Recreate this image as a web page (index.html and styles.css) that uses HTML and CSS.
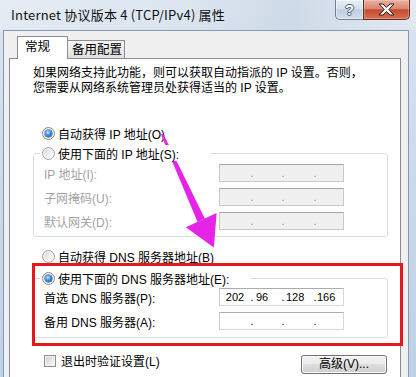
FILE: index.html
```html
<!DOCTYPE html>
<html lang="zh-CN">
<head>
<meta charset="utf-8">
<title>Internet 协议版本 4 (TCP/IPv4) 属性</title>
<link rel="stylesheet" href="styles.css">
</head>
<body>
<div class="window">
  <div class="titlebar">
    <span class="title">Internet 协议版本 4 (TCP/IPv4) 属性</span>
    <div class="caption">
      <div class="cap-btn help"><span class="help-glyph">?</span></div>
      <div class="cap-btn close">
        <svg width="17" height="13" viewBox="0 0 17 13"><polygon points="1,1 5,1 8.5,4.3 12,1 16,1 10.8,6.5 16,12 12,12 8.5,8.7 5,12 1,12 6.2,6.5" fill="#fff" stroke="#3c1810" stroke-width="1" stroke-linejoin="round"/></svg>
      </div>
    </div>
  </div>
  <div class="client">
    <div class="tabs">
      <div class="tab active">常规</div>
      <div class="tab">备用配置</div>
    </div>
    <div class="panel">
      <p class="desc">如果网络支持此功能，则可以获取自动指派的 IP 设置。否则，<br>您需要从网络系统管理员处获得适当的 IP 设置。</p>

      <div class="opt first"><span class="radio checked"></span><span>自动获得 IP 地址(O)</span></div>
      <div class="opt legend legend-ip"><span class="radio"></span><span>使用下面的 IP 地址(S):</span></div>
      <div class="group group-ip">
        <div class="field"><span class="lbl dis">IP 地址(I):</span>
          <div class="ipbox dis"><span class="seg s1"></span><span class="dot">.</span><span class="seg s2"></span><span class="dot">.</span><span class="seg s3"></span><span class="dot">.</span><span class="seg s4"></span></div>
        </div>
        <div class="field"><span class="lbl dis">子网掩码(U):</span>
          <div class="ipbox dis"><span class="seg s1"></span><span class="dot">.</span><span class="seg s2"></span><span class="dot">.</span><span class="seg s3"></span><span class="dot">.</span><span class="seg s4"></span></div>
        </div>
        <div class="field"><span class="lbl dis">默认网关(D):</span>
          <div class="ipbox dis"><span class="seg s1"></span><span class="dot">.</span><span class="seg s2"></span><span class="dot">.</span><span class="seg s3"></span><span class="dot">.</span><span class="seg s4"></span></div>
        </div>
      </div>

      <div class="opt after-group"><span class="radio"></span><span>自动获得 DNS 服务器地址(B)</span></div>
      <div class="opt legend legend-dns"><span class="radio checked"></span><span>使用下面的 DNS 服务器地址(E):</span></div>
      <div class="group group-dns">
        <div class="field"><span class="lbl">首选 DNS 服务器(P):</span>
          <div class="ipbox"><span class="seg s1">202</span><span class="dot">.</span><span class="seg s2">96</span><span class="dot">.</span><span class="seg s3">128</span><span class="dot">.</span><span class="seg s4">166</span></div>
        </div>
        <div class="field"><span class="lbl">备用 DNS 服务器(A):</span>
          <div class="ipbox"><span class="seg s1"></span><span class="dot">.</span><span class="seg s2"></span><span class="dot">.</span><span class="seg s3"></span><span class="dot">.</span><span class="seg s4"></span></div>
        </div>
      </div>

      <div class="bottom-row">
        <div class="check-opt"><span class="checkbox"></span><span>退出时验证设置(L)</span></div>
        <div class="btn">高级(V)...</div>
      </div>
    </div>
  </div>

  <svg class="arrow" width="416" height="377" viewBox="0 0 416 377">
    <polygon points="160.9,134.6 163.1,133.4 204.8,218.5 197.6,221.9" fill="#e524e8"/>
    <polygon points="216.6,213.1 213.9,247.6 185.8,227.3" fill="#e524e8"/>
  </svg>
  <div class="annot"></div>
</div>
</body>
</html>
```

FILE: styles.css
```css
* { box-sizing: border-box; }

html, body {
  margin: 0;
  padding: 0;
}

body {
  font-family: "Liberation Sans", "Noto Sans CJK SC", sans-serif;
  font-size: 12px;
  color: #000;
  background: #fff;
}

.window {
  position: relative;
  width: 416px;
  height: 377px;
  overflow: hidden;
  display: flex;
  flex-direction: column;
  background: linear-gradient(180deg, #dce6f1 0%, #cddbea 40%, #bed2e8 100%);
}

/* ---------- title bar ---------- */
.titlebar {
  flex: none;
  height: 30px;
  display: flex;
  align-items: flex-start;
  padding-left: 11px;
  background: linear-gradient(90deg, rgba(255,255,255,0.25) 0%, rgba(255,255,255,0) 45%, rgba(120,140,165,0.12) 70%, rgba(255,255,255,0.2) 100%);
}

.title {
  margin-top: 6px;
  font-family: "Noto Sans CJK SC", sans-serif;
  font-size: 13px;
  line-height: 18px;
  letter-spacing: 0.2px;
  color: #111;
  white-space: nowrap;
}

.caption {
  margin-left: auto;
  margin-right: 6px;
  display: flex;
}

.cap-btn {
  height: 20px;
  display: flex;
  align-items: center;
  justify-content: center;
}

.help {
  width: 28px;
  border: 1px solid #6f8198;
  border-top: 0;
  border-right: 0;
  border-radius: 0 0 0 5px;
  background: linear-gradient(180deg, #e8eef5 0%, #d6e1ed 45%, #bfcfe1 52%, #d0dded 100%);
  box-shadow: inset 0 0 0 1px rgba(255,255,255,0.45);
}

.help-glyph {
  font-family: "Liberation Sans", sans-serif;
  font-weight: bold;
  font-size: 15px;
  line-height: 16px;
  color: #fff;
  text-shadow: 1px 0 0 #4b5a6e, -1px 0 0 #4b5a6e, 0 1px 0 #4b5a6e, 0 -1px 0 #4b5a6e;
}

.close {
  width: 47px;
  border: 1px solid #5e2c22;
  border-top: 0;
  border-radius: 0 0 5px 0;
  background: linear-gradient(180deg, #e9b1a2 0%, #da8670 45%, #c44a31 52%, #d3714f 100%);
  box-shadow: inset 0 0 0 1px rgba(255,220,200,0.35);
}

/* ---------- client area ---------- */
.client {
  flex: 1;
  min-height: 0;
  margin: 0 7px 0 3px;
  background: #f0f0f0;
  border: 1px solid #8698ae;
  border-bottom: 0;
  padding: 5px 7px 0 5px;
  display: flex;
  flex-direction: column;
}

.tabs {
  flex: none;
  height: 22px;
  display: flex;
  align-items: flex-end;
  padding-left: 8px;
  position: relative;
  z-index: 1;
}

.tab {
  height: 18px;
  width: 57px;
  border: 1px solid #898c95;
  border-left: 0;
  border-bottom: 0;
  background: linear-gradient(180deg, #f6f6f6 0%, #ebebeb 50%, #dedede 100%);
  padding: 2px 0 0 4px;
  font-size: 12.5px;
  line-height: 15px;
  white-space: nowrap;
}

.tab.active {
  height: 23px;
  width: 51px;
  border-left: 1px solid #898c95;
  background: #fff;
  margin-bottom: -1px;
  padding: 3px 0 0 7px;
}

.panel {
  flex: 1;
  background: #fff;
  border: 1px solid #898c95;
  border-bottom: 0;
  padding: 7px 12px 0 23px;
}

.desc {
  margin: 0;
  line-height: 15px;
  white-space: nowrap;
}

/* ---------- options ---------- */
.opt {
  display: flex;
  align-items: center;
  height: 16px;
  padding-left: 9px;
  gap: 3px;
  white-space: nowrap;
}

.opt.first { margin-top: 29px; }
.opt.after-group { margin-top: 11px; }

.legend {
  position: relative;
  z-index: 1;
  background: #fff;
  margin-left: 7px;
  padding-left: 2px;
}

.legend-ip { margin-top: 4px; width: 170px; }
.legend-dns { margin-top: 6px; width: 210px; }

.radio {
  position: relative;
  flex: none;
  width: 13px;
  height: 13px;
  border-radius: 50%;
  border: 1px solid #a4a4a4;
  background: linear-gradient(135deg, #d6d6d6 0%, #f2f2f2 60%, #ffffff 100%);
  box-shadow: inset 0 0 0 1px #f7f7f7;
}

.radio.checked {
  border-color: #8a8a8a;
}

.radio.checked::after {
  content: "";
  position: absolute;
  left: 2px;
  top: 2px;
  width: 7px;
  height: 7px;
  border-radius: 50%;
  background: radial-gradient(circle at 40% 35%, #c4e6ff 0%, #4a9ae6 40%, #124fa0 85%);
  box-shadow: 0 0 0 0.5px #1b4f8e;
}

/* ---------- group boxes ---------- */
.group {
  margin-top: -8px;
  border: 1px solid #d5dfe5;
  border-radius: 3px;
  display: flex;
  flex-direction: column;
  gap: 6px;
}

.group-ip { padding: 10px 0 6px 10px; }
.group-dns { padding: 9px 0 7px 10px; }

.field {
  display: flex;
  align-items: center;
  height: 18px;
}

.lbl {
  width: 175px;
  flex: none;
  white-space: nowrap;
}

.lbl.dis { color: #a2a2a2; }

.ipbox {
  width: 125px;
  height: 18px;
  border: 1px solid #d3d7dc;
  border-top-color: #a9adb3;
  border-left-color: #c8ccd1;
  background: #fff;
  display: flex;
  font-family: "Liberation Sans", sans-serif;
  font-size: 11px;
  line-height: 16px;
  color: #000;
}

.ipbox.dis {
  background: #f0f0f0;
  border-color: #c9c9c9;
  border-top-color: #a6a6a6;
  color: #8a8a8a;
}

.seg { flex: none; white-space: nowrap; }
.s1 { width: 30px; text-align: center; }
.s2 { width: 27px; padding-left: 2px; }
.s3 { width: 28px; padding-left: 1px; }
.s4 { width: 26px; }

.dot {
  flex: none;
  width: 4px;
  text-align: center;
}

/* ---------- bottom row ---------- */
.bottom-row {
  margin-top: 16px;
  display: flex;
  align-items: flex-start;
}

.check-opt {
  display: flex;
  align-items: center;
  gap: 5px;
  height: 13px;
  padding-left: 11px;
  white-space: nowrap;
}

.checkbox {
  flex: none;
  width: 12px;
  height: 12px;
  border: 1px solid #8e8f8f;
  background: linear-gradient(135deg, #c9c9c9 0%, #ececec 60%, #f7f7f7 100%);
  box-shadow: inset 0 0 0 1px #f4f4f4;
}

.btn {
  margin-left: auto;
  margin-top: 1px;
  margin-right: 1px;
  width: 86px;
  height: 19px;
  border: 1px solid #707070;
  border-radius: 3px;
  background: linear-gradient(180deg, #f2f2f2 0%, #ebebeb 45%, #dddddd 50%, #cfcfcf 100%);
  box-shadow: inset 0 0 0 1px #fcfcfc;
  text-align: center;
  line-height: 17px;
  white-space: nowrap;
}

/* ---------- annotations ---------- */
.arrow {
  position: absolute;
  left: 0;
  top: 0;
  pointer-events: none;
}

.annot {
  position: absolute;
  left: 32px;
  top: 263px;
  width: 371px;
  height: 83px;
  border: 3px solid #e5161d;
  pointer-events: none;
}
```
